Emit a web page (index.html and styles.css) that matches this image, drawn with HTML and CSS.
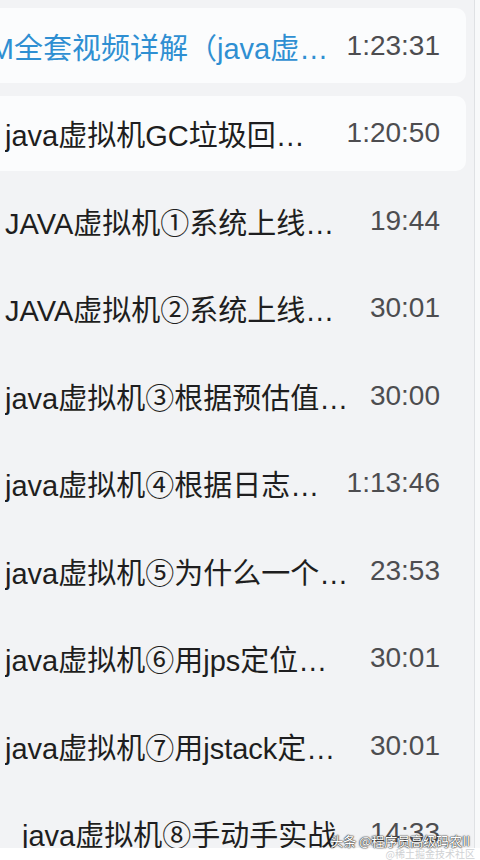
FILE: index.html
```html
<!DOCTYPE html>
<html lang="zh-CN">
<head>
  <meta charset="UTF-8" />
  <meta name="viewport" content="width=device-width, initial-scale=1.0"/>
  <title>视频选集</title>
  <link rel="stylesheet" href="styles.css">
</head>
<body>
  <div class="screen">
    <div class="list">
      <!-- 正在播放 -->
      <div class="row card active">
        <span class="title shifted">JVM全套视频详解（java虚…</span>
        <span class="time">1:23:31</span>
      </div>
      <div class="row card">
        <span class="title">java虚拟机GC垃圾回…</span>
        <span class="time">1:20:50</span>
      </div>
      <div class="row">
        <span class="title">JAVA虚拟机①系统上线…</span>
        <span class="time">19:44</span>
      </div>
      <div class="row">
        <span class="title">JAVA虚拟机②系统上线…</span>
        <span class="time">30:01</span>
      </div>
      <div class="row">
        <span class="title">java虚拟机③根据预估值…</span>
        <span class="time">30:00</span>
      </div>
      <div class="row">
        <span class="title">java虚拟机④根据日志…</span>
        <span class="time">1:13:46</span>
      </div>
      <div class="row">
        <span class="title">java虚拟机⑤为什么一个…</span>
        <span class="time">23:53</span>
      </div>
      <div class="row">
        <span class="title">java虚拟机⑥用jps定位…</span>
        <span class="time">30:01</span>
      </div>
      <div class="row">
        <span class="title">java虚拟机⑦用jstack定…</span>
        <span class="time">30:01</span>
      </div>
      <div class="row last">
        <span class="title">java虚拟机⑧手动手实战</span>
        <span class="time">14:33</span>
      </div>
    </div>
    <div class="edge"></div>
    <div class="mark">
      <div class="mark-main">头条 @程序员高级码农II</div>
      <div class="mark-sub">@稀土掘金技术社区</div>
    </div>
  </div>
</body>
</html>
```

FILE: styles.css
```css
body {
  margin: 0;
  background: #ffffff;
  font-family: 'Liberation Sans', 'Noto Sans CJK SC', sans-serif;
}
.screen {
  position: relative;
  display: flex;
  width: 480px;
  height: 860px;
  overflow: hidden;
}
.list {
  flex: 1;
  height: 848px;
  overflow: hidden;
  background: #f2f3f5;
  padding-top: 8px;
  box-sizing: border-box;
}
.edge {
  width: 5px;
  height: 848px;
  border-left: 1px solid #dfe1e4;
  background: #f8f9fa;
}
.row {
  display: flex;
  align-items: center;
  height: 75px;
  margin: 0 8px 12.5px -10px;
  padding: 0 26px 0 15px;
  border-radius: 10px;
  font-size: 29px;
}
.card { background: #fbfcfd; }
.title {
  flex: 1;
  white-space: nowrap;
  overflow: hidden;
  color: #1e1e20;
}
.shifted {
  margin-left: -5px;
  text-indent: -44px;
}
.active .title { color: #2f8fd2; }
.last { padding-left: 32px; }
.time {
  margin-left: 8px;
  font-size: 28px;
  color: #4d4d50;
  white-space: nowrap;
}
.mark {
  position: absolute;
  right: 5px;
  bottom: 0;
  text-align: right;
  font-family: 'Noto Sans CJK SC', sans-serif;
}
.mark-main {
  margin-right: 5px;
  font-size: 13px;
  line-height: 14px;
  color: #ffffff;
  text-shadow: 0 0 1px #333, 0 0 1px #333, 0 0 2px #333;
}
.mark-sub {
  font-size: 10px;
  line-height: 12px;
  color: #cfd1d4;
}
```
